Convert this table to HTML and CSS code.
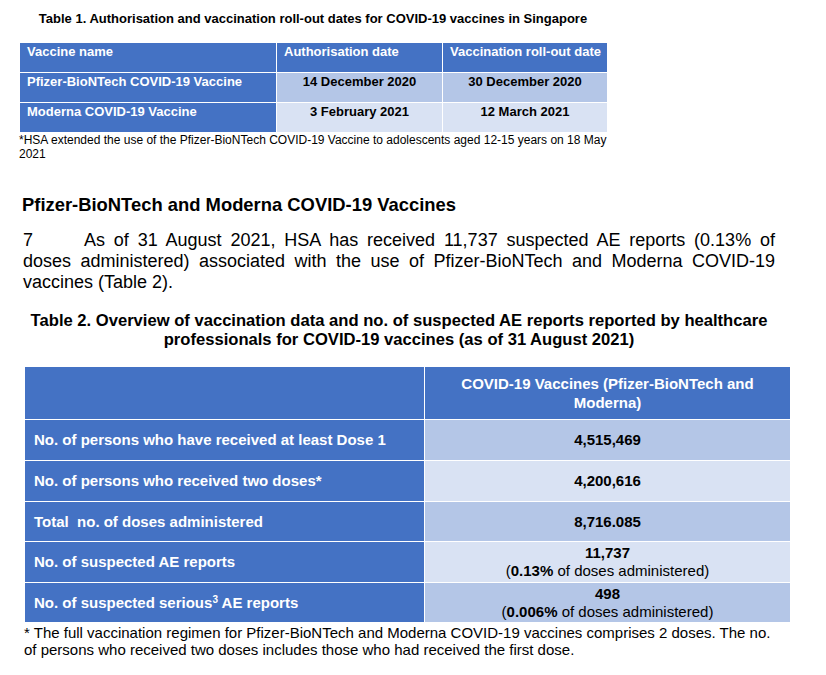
FILE: index.html
```html
<!DOCTYPE html>
<html lang="en">
<head>
<meta charset="utf-8">
<title>COVID-19 vaccines in Singapore</title>
<link rel="stylesheet" href="styles.css">
</head>
<body>
<main class="page">
  <section class="t1-wrap">
    <h2 class="t1-title">Table 1. Authorisation and vaccination roll-out dates for COVID-19 vaccines in Singapore</h2>
    <table class="t1">
      <colgroup><col class="t1-c1"><col class="t1-c2"><col class="t1-c3"></colgroup>
      <tr class="t1-head">
        <td>Vaccine name</td>
        <td>Authorisation date</td>
        <td>Vaccination roll-out date</td>
      </tr>
      <tr class="t1-row dark">
        <td class="lbl">Pfizer-BioNTech COVID-19 Vaccine</td>
        <td class="val">14 December 2020</td>
        <td class="val">30 December 2020</td>
      </tr>
      <tr class="t1-row light">
        <td class="lbl">Moderna COVID-19 Vaccine</td>
        <td class="val">3 February 2021</td>
        <td class="val">12 March 2021</td>
      </tr>
    </table>
    <p class="t1-note">*HSA extended the use of the Pfizer-BioNTech COVID-19 Vaccine to adolescents aged 12-15 years on 18 May 2021</p>
  </section>

  <h2 class="section-head">Pfizer-BioNTech and Moderna COVID-19 Vaccines</h2>
  <p class="para">7&emsp;&emsp;&ensp;&#8198;&#8198;As of 31 August 2021, HSA has received 11,737 suspected AE reports (0.13% of doses administered) associated with the use of Pfizer-BioNTech and Moderna COVID-19 vaccines (Table 2).</p>

  <h3 class="t2-title">Table 2. Overview of vaccination data and no. of suspected AE reports reported by healthcare professionals for COVID-19 vaccines (as of 31 August 2021)</h3>

  <table class="t2">
    <colgroup><col class="t2-c1"><col class="t2-c2"></colgroup>
    <tr class="t2-head">
      <td></td>
      <td class="head-val">COVID-19 Vaccines (Pfizer-BioNTech and Moderna)</td>
    </tr>
    <tr class="t2-row dark">
      <td class="lbl">No. of persons who have received at least Dose 1</td>
      <td class="val">4,515,469</td>
    </tr>
    <tr class="t2-row light">
      <td class="lbl">No. of persons who received two doses*</td>
      <td class="val">4,200,616</td>
    </tr>
    <tr class="t2-row dark short">
      <td class="lbl">Total&nbsp; no. of doses administered</td>
      <td class="val">8,716.085</td>
    </tr>
    <tr class="t2-row light">
      <td class="lbl">No. of suspected AE reports</td>
      <td class="val">11,737<br><span class="pct">(<b>0.13%</b> of doses administered)</span></td>
    </tr>
    <tr class="t2-row dark short">
      <td class="lbl">No. of suspected serious<sup>3</sup> AE reports</td>
      <td class="val">498<br><span class="pct">(<b>0.006%</b> of doses administered)</span></td>
    </tr>
  </table>
  <p class="t2-note">* The full vaccination regimen for Pfizer-BioNTech and Moderna COVID-19 vaccines comprises 2 doses. The no. of persons who received two doses includes those who had received the first dose.</p>
</main>
</body>
</html>
```

FILE: styles.css
```css
html, body {
  margin: 0;
  padding: 0;
  background: #ffffff;
}

body {
  font-family: "Liberation Sans", Arial, sans-serif;
  color: #000000;
}

.page {
  width: 826px;
  height: 675px;
  padding: 11px 0 0 23px;
  box-sizing: border-box;
  overflow: hidden;
}

/* ---------- Table 1 ---------- */
.t1-wrap {
  width: 588px;
  margin-left: -4px;
}

.t1-title {
  margin: 0 0 16px;
  font-size: 13px;
  line-height: 15px;
  font-weight: bold;
  text-align: center;
}

.t1 {
  width: 588px;
  border-collapse: collapse;
  table-layout: fixed;
  font-size: 13px;
  line-height: 15px;
  font-weight: bold;
}

.t1-c1 { width: 257px; }
.t1-c2 { width: 166px; }
.t1-c3 { width: 165px; }

.t1 td {
  border: 1px solid #ffffff;
  padding: 1px 2px 0 7px;
  vertical-align: top;
  height: 30px;
  box-sizing: border-box;
  white-space: nowrap;
}

.t1-head td {
  background: #4472c4;
  color: #ffffff;
}

.t1 td.lbl {
  background: #4472c4;
  color: #ffffff;
}

.t1 td.val {
  text-align: center;
  padding: 1px 0 0;
  color: #000000;
}

.t1-row.dark td.val { background: #b4c6e7; }
.t1-row.light td.val { background: #d9e2f3; }

.t1-note {
  margin: 1px 0 0;
  font-size: 12px;
  line-height: 13.5px;
}

/* ---------- Section text ---------- */
.section-head {
  margin: 33px 0 0 -1px;
  font-size: 18.4px;
  line-height: 21px;
  font-weight: bold;
}

.para {
  width: 752px;
  margin: 15px 0 0;
  font-size: 18px;
  line-height: 21px;
  text-align: justify;
}

.t2-title {
  width: 752px;
  margin: 18px 0 0;
  font-size: 16.6px;
  line-height: 19px;
  font-weight: bold;
  text-align: center;
}

/* ---------- Table 2 ---------- */
.t2 {
  width: 766px;
  margin: 17px 0 0 1px;
  border-collapse: collapse;
  table-layout: fixed;
  font-size: 15px;
  font-weight: bold;
}

.t2-c1 { width: 400px; }
.t2-c2 { width: 366px; }

.t2 td {
  border: 1px solid #ffffff;
  box-sizing: border-box;
  vertical-align: middle;
}

.t2-head td {
  height: 53px;
  background: #4472c4;
  color: #ffffff;
  line-height: 19px;
}

.t2 td.head-val {
  text-align: center;
  padding: 0 5px;
}

.t2-row td {
  height: 41px;
  line-height: 18px;
}

.t2-row.short td {
  height: 40px;
}

.t2 td.lbl {
  background: #4472c4;
  color: #ffffff;
  padding: 0 0 0 9px;
}

.t2 td.val {
  text-align: center;
  padding: 0;
  color: #000000;
}

.t2-row.dark td.val { background: #b4c6e7; }
.t2-row.light td.val { background: #d9e2f3; }

.pct {
  font-weight: normal;
}

.pct b {
  font-weight: bold;
}

sup {
  font-size: 10px;
  line-height: 0;
  vertical-align: 5px;
}

.t2-note {
  width: 752px;
  margin: 1px 0 0 1px;
  font-size: 15px;
  line-height: 17px;
}
```
